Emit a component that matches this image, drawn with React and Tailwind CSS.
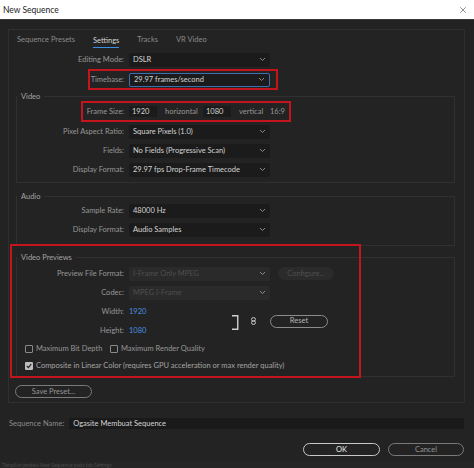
import React from "react";
import { X } from "lucide-react";

const RED = "border-[#c4141c]";

function Chevron() {
  return (
    <svg width="7" height="5" viewBox="0 0 7 5" className="shrink-0">
      <polyline points="1,1 3.5,3.5 6,1" fill="none" stroke="#8a8a8a" strokeWidth="1" />
    </svg>
  );
}

function Select({ value, blue, disabled }) {
  return (
    <div
      className={`ml-[5px] flex items-center justify-between w-[141px] h-[14px] pl-[4px] pr-[4px] rounded-[2px] ${
        disabled ? "bg-[#2a2a2a] text-[#4f4f4f]" : "bg-[#1b1b1b] text-[#d4d4d4]"
      } ${blue ? "border border-[#3d6db3]" : ""}`}
    >
      <span className="whitespace-nowrap">{value}</span>
      <Chevron />
    </div>
  );
}

function Label({ w, children }) {
  return (
    <div className={`${w} shrink-0 flex justify-end whitespace-nowrap text-[#979797]`}>{children}</div>
  );
}

function Row({ label, w = "w-[107px]", children }) {
  return (
    <div className="flex items-center h-[19px]">
      <Label w={w}>{label}</Label>
      {children}
    </div>
  );
}

function Fieldset({ legend, className = "", children }) {
  return (
    <fieldset className={`ml-[7px] w-[439px] border border-[#303030] ${className}`}>
      <legend className="px-[4px] text-[#a4a4a4] leading-[9px]">{legend}</legend>
      {children}
    </fieldset>
  );
}

function Checkbox({ checked }) {
  return checked ? (
    <div className="w-[8px] h-[8px] rounded-[1px] bg-[#bdbdbd] flex items-center justify-center shrink-0">
      <svg width="6" height="6" viewBox="0 0 6 6">
        <polyline points="0.8,3 2.4,4.6 5.2,1.2" fill="none" stroke="#232323" strokeWidth="1.2" />
      </svg>
    </div>
  ) : (
    <div className="w-[8px] h-[8px] rounded-[1px] border border-[#8a8a8a] shrink-0" />
  );
}

function Pill({ children, className = "" }) {
  return (
    <div className={`flex items-center justify-center rounded-full border ${className}`}>{children}</div>
  );
}

export default function App() {
  return (
    <div className="w-[474px] h-[468px] bg-[#232323] flex flex-col overflow-hidden text-[7.5px] leading-[10px] font-[family-name:Lato,'Liberation_Sans',sans-serif]">
      {/* window title bar */}
      <div className="h-[20px] shrink-0 bg-white border-b border-[#3a3a3a] flex items-center justify-between pl-[3px] pr-[6px]">
        <span className="text-[8.5px] text-[#1a1a1a]">New Sequence</span>
        <X size={10} strokeWidth={1.2} color="#222" />
      </div>

      <div className="pl-[8px] pr-[10px] pt-[9px]">
        {/* main panel */}
        <div className="w-[457px] h-[374px] border border-[#2f2f2f]">
          {/* tabs */}
          <div className="h-[20px] flex items-center pl-[8px] gap-[18px] text-[#8a8a8a]">
            <span>Sequence Presets</span>
            <span className="text-[#d4d4d4] border-b-[1.5px] border-[#3a8ee6] mt-[3px] pb-[1px]">Settings</span>
            <span>Tracks</span>
            <span>VR Video</span>
          </div>

          <Row label="Editing Mode:" w="w-[115px]">
            <Select value="DSLR" />
          </Row>

          <div className={`ml-[79px] w-[190px] h-[21px] border-2 ${RED} flex items-center`}>
            <Label w="w-[34px]">Timebase:</Label>
            <Select value="29.97  frames/second" blue />
          </div>

          <Fieldset legend="Video" className="mt-[2px] pb-[3px]">
            <div className={`ml-[64px] w-[210px] h-[21px] border-2 ${RED} flex items-center`}>
              <Label w="w-[41px]">Frame Size:</Label>
              <div className="ml-[5px] w-[28px] h-[11px] bg-[#1b1b1b] text-[#d4d4d4] pl-[3px] flex items-center">1920</div>
              <span className="ml-[8px] w-[38px] text-[#979797]">horizontal</span>
              <div className="w-[28px] h-[11px] bg-[#1b1b1b] text-[#d4d4d4] pl-[3px] flex items-center">1080</div>
              <span className="ml-[8px] w-[31px] text-[#979797]">vertical</span>
              <span className="text-[#979797]">16:9</span>
            </div>
            <Row label="Pixel Aspect Ratio:">
              <Select value="Square Pixels (1.0)" />
            </Row>
            <Row label="Fields:">
              <Select value="No Fields (Progressive Scan)" />
            </Row>
            <Row label="Display Format:">
              <Select value="29.97 fps Drop-Frame Timecode" />
            </Row>
          </Fieldset>

          <Fieldset legend="Audio" className="mt-[9px] pb-[6px]">
            <Row label="Sample Rate:">
              <Select value="48000 Hz" />
            </Row>
            <Row label="Display Format:">
              <Select value="Audio Samples" />
            </Row>
          </Fieldset>

          <div className="relative mt-[7px]">
            <Fieldset legend="Video Previews" className="pt-[2px] pb-[2px]">
              <Row label="Preview File Format:">
                <Select value="I-Frame Only MPEG" disabled />
                <Pill className="ml-[8px] w-[56px] h-[13px] bg-[#2b2b2b] border-[#2b2b2b] text-[#4f4f4f]">Configure...</Pill>
              </Row>
              <Row label="Codec:">
                <Select value="MPEG I-Frame" disabled />
              </Row>
              <div className="flex items-center">
                <div className="w-[210px]">
                  <Row label="Width:">
                    <span className="ml-[5px] text-[#4a8fe0]">1920</span>
                  </Row>
                  <Row label="Height:">
                    <span className="ml-[5px] text-[#4a8fe0]">1080</span>
                  </Row>
                </div>
                <svg width="7" height="15" viewBox="0 0 7 15" className="ml-[5px] mt-[3px]">
                  <path d="M0 0.75 H5.75 V14.25 H0" fill="none" stroke="#cfcfcf" strokeWidth="1.4" />
                </svg>
                <svg width="5" height="8" viewBox="0 0 5 8" className="ml-[12px]">
                  <rect x="0.6" y="0.6" width="3.8" height="3.6" rx="1.6" fill="none" stroke="#c8c8c8" strokeWidth="1" />
                  <rect x="0.6" y="3.8" width="3.8" height="3.6" rx="1.6" fill="none" stroke="#c8c8c8" strokeWidth="1" />
                </svg>
                <Pill className="ml-[14px] w-[58px] h-[13px] border-[#8c8c8c] text-[#b4b4b4]">Reset</Pill>
              </div>
              <div className="flex items-center h-[17px] pl-[8px] text-[#979797]">
                <div className="w-[85px] flex items-center gap-[3px]">
                  <Checkbox />
                  <span>Maximum Bit Depth</span>
                </div>
                <div className="flex items-center gap-[3px]">
                  <Checkbox />
                  <span>Maximum Render Quality</span>
                </div>
              </div>
              <div className="flex items-center gap-[3px] h-[17px] pl-[8px] text-[#a4a4a4]">
                <Checkbox checked />
                <span>Composite in Linear Color (requires GPU acceleration or max render quality)</span>
              </div>
            </Fieldset>
            {/* annotation box drawn over the section */}
            <div className={`absolute left-[1px] top-[-9px] w-[351px] h-[134px] border-2 ${RED}`} />
          </div>

          <Pill className="mt-[8px] ml-[6px] w-[77px] h-[13px] border-[#7a7a7a] text-[#959595]">Save Preset...</Pill>
        </div>

        {/* sequence name */}
        <div className="mt-[15px] flex items-center pl-[1px]">
          <span className="text-[#8a8a8a] whitespace-nowrap">Sequence Name:</span>
          <div className="ml-[5px] w-[396px] h-[11px] bg-[#1a1a1a] text-[#d4d4d4] pl-[4px] flex items-center">
            Ogasite Membuat Sequence
          </div>
        </div>

        {/* dialog buttons */}
        <div className="mt-[14px] flex justify-end gap-[8px]">
          <Pill className="w-[77px] h-[13px] border-[#c8c8c8] text-[#eeeeee]">OK</Pill>
          <Pill className="w-[76px] h-[13px] border-[#7a7a7a] text-[#959595]">Cancel</Pill>
        </div>
      </div>

      <div className="mt-auto h-[6px] overflow-hidden bg-[#262626] pl-[2px] flex items-center">
        <span className="text-[5px] leading-[6px] text-[#4a4a4a] whitespace-nowrap">
          Tampilan jendela New Sequence pada tab Settings
        </span>
      </div>
    </div>
  );
}
